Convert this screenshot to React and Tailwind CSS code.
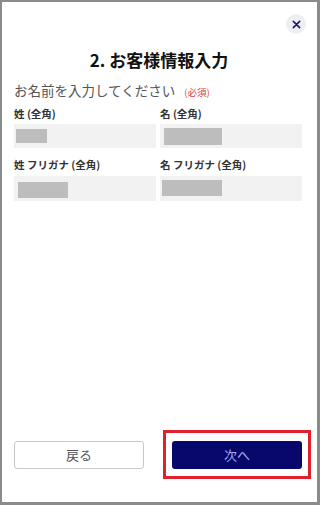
import React from "react";

const font = { fontFamily: '"Noto Sans CJK JP", "Noto Sans", sans-serif' };

export default function App() {
  return (
    <div className="w-[320px] h-[505px] bg-[#8a8a8a] pt-[2px] pl-[2px] pr-[3px] pb-[3px]" style={font}>
      <div className="w-full h-full bg-white flex flex-col relative">
        <div className="flex justify-end pt-[12px] pr-[11px]">
          <div className="w-[20px] h-[20px] rounded-full bg-[#eeeef6] flex items-center justify-center">
            <svg width="9" height="9" viewBox="0 0 10 10">
              <path d="M1.5 1.5 L8.5 8.5 M8.5 1.5 L1.5 8.5" stroke="#1e1e5a" strokeWidth="1.8" strokeLinecap="round" />
            </svg>
          </div>
        </div>
        <h1 className="text-center text-[17px] font-bold text-[#111] leading-none mt-[17px] pr-[1px]">2. お客様情報入力</h1>
        <div className="flex items-baseline mt-[16px] pl-[12px]">
          <span className="text-[13.5px] text-[#555] leading-none">お名前を入力してください</span>
          <span className="text-[9.5px] text-[#e03a3a] ml-[9px] leading-none">(必須)</span>
        </div>
        <div className="grid grid-cols-2 gap-x-[4px] pl-[12px] pr-[15px] mt-[11px]">
          <div>
            <div className="text-[10.5px] font-bold text-[#333] leading-none">姓 (全角)</div>
            <div className="mt-[5px] h-[24px] bg-[#f2f2f2] flex items-center pl-[2px]">
              <div className="w-[31px] h-[14px] bg-[#bdbdbd]" />
            </div>
          </div>
          <div>
            <div className="text-[10.5px] font-bold text-[#333] leading-none">名 (全角)</div>
            <div className="mt-[5px] h-[24px] bg-[#f2f2f2] flex items-center pl-[4px]">
              <div className="w-[58px] h-[17px] bg-[#bdbdbd]" />
            </div>
          </div>
          <div className="mt-[12px]">
            <div className="text-[10.5px] font-bold text-[#333] leading-none">姓 フリガナ (全角)</div>
            <div className="mt-[5px] h-[25px] bg-[#f2f2f2] flex items-end pl-[4px] pb-[3px]">
              <div className="w-[50px] h-[16px] bg-[#bdbdbd]" />
            </div>
          </div>
          <div className="mt-[12px]">
            <div className="text-[10.5px] font-bold text-[#333] leading-none">名 フリガナ (全角)</div>
            <div className="mt-[5px] h-[25px] bg-[#f2f2f2] flex items-start pl-[2px] pt-[4px]">
              <div className="w-[60px] h-[16px] bg-[#bdbdbd]" />
            </div>
          </div>
        </div>
        <div className="flex-1" />
        <div className="flex items-center pl-[12px] pb-[23px]">
          <button className="w-[130px] h-[28px] border border-[#c8c8c8] rounded-[3px] bg-white text-[13px] text-[#555]">戻る</button>
          <div className="ml-[19px] border-[3px] border-[#e0212b] px-[6px] pt-[8px] pb-[7px]">
            <button className="block w-[130px] h-[28px] rounded-[3px] bg-[#08086c] text-[13px] text-[#a8a8f0]">次へ</button>
          </div>
        </div>
      </div>
    </div>
  );
}
